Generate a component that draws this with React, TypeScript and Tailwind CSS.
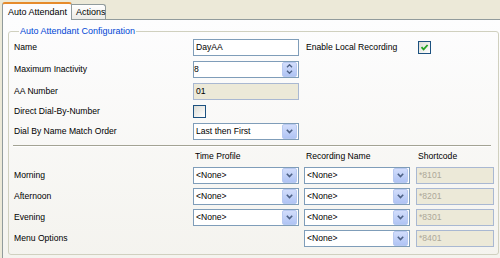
import React from 'react';

const ChevronDown = () => (
  <svg width="7" height="5" viewBox="0 0 7 5">
    <path d="M0.8 0.8 L3.5 3.6 L6.2 0.8" fill="none" stroke="#4d6185" strokeWidth="1.6" />
  </svg>
);

const ComboButton = () => (
  <div className="w-[15px] h-[15px] rounded-[2px] border border-[#b8c9f0] bg-gradient-to-b from-[#d2ddfb] to-[#b0c4f4] flex items-center justify-center">
    <ChevronDown />
  </div>
);

const SpinButton = () => (
  <div className="w-[15px] h-[15px] rounded-[2px] border border-[#b8c9f0] bg-gradient-to-b from-[#d2ddfb] to-[#b0c4f4] flex flex-col items-center justify-center gap-[2px]">
    <svg width="7" height="4" viewBox="0 0 7 4">
      <path d="M1 3.2 L3.5 0.8 L6 3.2" fill="none" stroke="#4d6185" strokeWidth="1.4" />
    </svg>
    <svg width="7" height="4" viewBox="0 0 7 4">
      <path d="M1 0.8 L3.5 3.2 L6 0.8" fill="none" stroke="#4d6185" strokeWidth="1.4" />
    </svg>
  </div>
);

const TextBox: React.FC<{ value: string; disabled?: boolean; grey?: boolean; w?: string }> = ({ value, disabled, grey, w = 'w-[106px]' }) => (
  <div
    className={`${w} h-[17px] border flex items-center px-[2px] ${
      disabled ? 'bg-[#ece9d8] border-[#a9b8d2]' : 'bg-white border-[#7f9db9]'
    } ${grey ? 'text-[#aca899]' : 'text-black'}`}
  >
    {value}
  </div>
);

const Combo: React.FC<{ value: string }> = ({ value }) => (
  <div className="w-[106px] h-[17px] border border-[#7f9db9] bg-white flex items-center pl-[2px] pr-px">
    <span className="flex-1">{value}</span>
    <ComboButton />
  </div>
);

const Spin: React.FC<{ value: string }> = ({ value }) => (
  <div className="w-[106px] h-[17px] border border-[#7f9db9] bg-white flex items-center pr-px">
    <span className="flex-1">{value}</span>
    <SpinButton />
  </div>
);

const CheckBox: React.FC<{ checked?: boolean }> = ({ checked }) => (
  <div className="w-[13px] h-[13px] border border-[#1c5180] bg-gradient-to-br from-[#dcdcd5] to-white flex items-center justify-center">
    {checked && (
      <svg width="9" height="9" viewBox="0 0 9 9">
        <path d="M1.5 4.2 L3.6 6.4 L7.6 2" fill="none" stroke="#21a121" strokeWidth="1.8" />
      </svg>
    )}
  </div>
);

const timeRows = [
  { label: 'Morning', code: '*8101', profile: true },
  { label: 'Afternoon', code: '*8201', profile: true },
  { label: 'Evening', code: '*8301', profile: true },
  { label: 'Menu Options', code: '*8401', profile: false },
];

export default function App() {
  return (
    <div className="w-[500px] h-[258px] overflow-hidden bg-[#ece9d8] font-['Liberation_Sans',Arial,sans-serif] text-[8.6px] text-black leading-none">
      {/* tabs */}
      <div className="h-[19px] flex items-end pl-[2px] relative z-10">
        <div className="w-[70px] h-[18px] -mb-px bg-[#fcfcfe] border border-b-0 border-[#919b9c] border-t-2 border-t-[#e68b2c] rounded-t-[3px] flex items-center pl-[5px] text-[9px]">
          Auto Attendant
        </div>
        <div className="w-[34px] h-[15px] bg-gradient-to-b from-white to-[#ecebe6] border border-b-0 border-l-0 border-[#919b9c] rounded-tr-[3px] flex items-center pl-[4px] text-[9px]">
          Actions
        </div>
      </div>

      {/* panel */}
      <div className="ml-[2px] w-[506px] h-[245px] border border-[#919b9c] bg-gradient-to-b from-[#fdfdfe] to-[#f4f3ee] pl-[5px] pt-[7px]">
        <fieldset className="w-[491px] h-[228px] border border-[#d0d0bf] rounded-[3px] pl-[5px]">
          <legend className="ml-[5px] px-[1px] text-[#0046d5] text-[9px]">Auto Attendant Configuration</legend>

          <div className="flex items-center h-[22px]">
            <span className="w-[179px]">Name</span>
            <TextBox value="DayAA" />
            <span className="ml-[7px] w-[112px]">Enable Local Recording</span>
            <CheckBox checked />
          </div>
          <div className="flex items-center h-[22px]">
            <span className="w-[179px]">Maximum Inactivity</span>
            <Spin value="8" />
          </div>
          <div className="flex items-center h-[22px]">
            <span className="w-[179px]">AA Number</span>
            <TextBox value="01" disabled />
          </div>
          <div className="flex items-center h-[18px]">
            <span className="w-[179px]">Direct Dial-By-Number</span>
            <CheckBox />
          </div>
          <div className="flex items-center h-[22px]">
            <span className="w-[179px]">Dial By Name Match Order</span>
            <Combo value="Last then First" />
          </div>

          <div className="mt-[3px] w-[478px] -ml-px h-[2px] border-t border-[#a3a394] border-b border-b-white" />

          <div className="flex items-center h-[18px]">
            <span className="w-[181px]" />
            <span className="w-[111px]">Time Profile</span>
            <span className="w-[112px]">Recording Name</span>
            <span>Shortcode</span>
          </div>
          {timeRows.map((r) => (
            <div key={r.label} className="flex items-center h-[21px]">
              <span className="w-[179px]">{r.label}</span>
              {r.profile ? <Combo value="<None>" /> : <span className="w-[106px]" />}
              <span className="w-[5px]" />
              <Combo value="<None>" />
              <span className="w-[6px]" />
              <TextBox value={r.code} disabled grey w="w-[78px]" />
            </div>
          ))}
        </fieldset>
      </div>
    </div>
  );
}
